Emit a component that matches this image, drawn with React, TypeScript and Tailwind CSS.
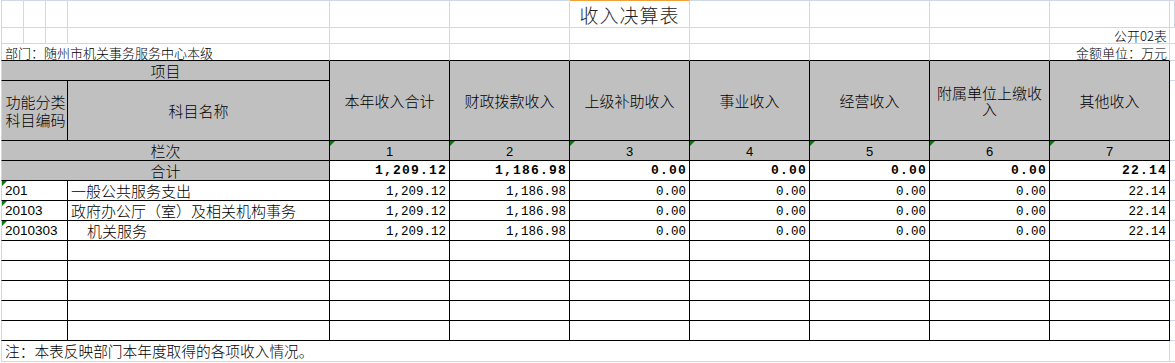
import React from 'react';

// Income statement sheet, drawn as a spreadsheet table
const heads = ['本年收入合计', '财政拨款收入', '上级补助收入', '事业收入', '经营收入', '附属单位上缴收入', '其他收入'];
const totals = ['1,209.12', '1,186.98', '0.00', '0.00', '0.00', '0.00', '22.14'];
const rows = [
  { code: '201', name: '一般公共服务支出', indent: false },
  { code: '20103', name: '政府办公厅（室）及相关机构事务', indent: false },
  { code: '2010303', name: '机关服务', indent: true },
];

const grid = 'border-[#d0d7e5]';

const Flag = () => (
  <div className="absolute top-0 left-0 w-0 h-0 border-t-[5px] border-t-[#008000] border-r-[5px] border-r-transparent" />
);

const App: React.FC = () => {
  const cols = [0, 1, 2, 3, 4, 5, 6];

  return (
    <div className="w-[1175px] h-[363px] overflow-hidden bg-white pl-px text-black font-light font-['Noto_Sans_CJK_SC',sans-serif]">
      <table className="table-fixed border-separate border-spacing-0 w-[1174px]">
        <colgroup>
          <col className="w-[23px]" />
          <col className="w-[22px]" />
          <col className="w-[22px]" />
          <col className="w-[262px]" />
          {cols.map((i) => (
            <col key={i} className="w-[120px]" />
          ))}
          <col className="w-[5px]" />
        </colgroup>
        <tbody>
          {/* title row */}
          <tr>
            {[0, 1, 2, 3, 4, 5].map((i) => (
              <td key={i} className={`h-[28px] border-t border-r border-b ${grid} ${i === 0 ? 'border-l' : ''}`} />
            ))}
            <td className={`h-[28px] border-t border-t-[#f0a13c] border-r border-b ${grid} text-center align-middle text-[19px] leading-none text-[#222] tracking-[1px]`}>
              收入决算表
            </td>
            {[7, 8, 9, 10, 11].map((i) => (
              <td key={i} className={`h-[28px] border-t border-r border-b ${grid}`} />
            ))}
          </tr>

          {/* form number */}
          <tr>
            {[0, 1, 2, 3, 4, 5, 6, 7, 8, 9].map((i) => (
              <td key={i} className={`h-[16px] border-r border-b ${grid} ${i === 0 ? 'border-l' : ''}`} />
            ))}
            <td className={`h-[16px] border-r border-b ${grid} text-right align-bottom text-[13px] leading-[14px] pr-[2px] whitespace-nowrap`}>
              公开02表
            </td>
            <td className={`h-[16px] border-b ${grid}`} />
          </tr>

          {/* department + unit */}
          <tr>
            <td colSpan={4} className={`h-[17px] border-l ${grid} border-r border-b border-b-black text-[13px] leading-[14px] align-bottom pl-[3px] whitespace-nowrap`}>
              部门：随州市机关事务服务中心本级
            </td>
            {[0, 1, 2, 3, 4, 5].map((i) => (
              <td key={i} className={`h-[17px] border-r ${grid} border-b border-b-black`} />
            ))}
            <td className={`h-[17px] border-r ${grid} border-b border-b-black text-right align-bottom text-[13px] leading-[14px] pr-[2px] whitespace-nowrap`}>
              金额单位：万元
            </td>
            <td className={`h-[17px] border-b ${grid}`} />
          </tr>

          {/* header 1 */}
          <tr>
            <td colSpan={4} className={`h-[20px] bg-[#c0c0c0] border-l ${grid} border-r border-r-black border-b border-b-black text-center align-middle text-[15px] leading-none`}>
              项目
            </td>
            {heads.map((h) => (
              <td
                key={h}
                rowSpan={2}
                className="bg-[#c0c0c0] border-r border-b border-black text-center align-middle text-[15px] leading-[16px] px-[6px]"
              >
                {h}
              </td>
            ))}
            <td className={`h-[20px] border-b ${grid}`} />
          </tr>

          {/* header 2 */}
          <tr>
            <td colSpan={3} className={`h-[60px] bg-[#c0c0c0] border-l ${grid} border-r border-r-black border-b border-b-black text-center align-middle text-[15px] leading-[18px] pl-[2px]`}>
              功能分类科目编码
            </td>
            <td className="h-[60px] bg-[#c0c0c0] border-r border-b border-black text-center align-middle text-[15px] leading-none">
              科目名称
            </td>
            <td className={`h-[60px] border-b ${grid}`} />
          </tr>

          {/* column numbers */}
          <tr>
            <td colSpan={4} className={`h-[20px] bg-[#c0c0c0] border-l ${grid} border-r border-r-black border-b border-b-black text-center align-middle text-[15px] leading-none`}>
              栏次
            </td>
            {cols.map((i) => (
              <td key={i} className="relative h-[20px] bg-[#c0c0c0] border-r border-b border-black text-center align-bottom text-[13px] leading-[17px] font-normal font-['Liberation_Sans',sans-serif]">
                <Flag />
                {i + 1}
              </td>
            ))}
            <td className={`h-[20px] border-b ${grid}`} />
          </tr>

          {/* total */}
          <tr>
            <td colSpan={4} className={`h-[20px] bg-[#c0c0c0] border-l ${grid} border-r border-r-black border-b border-b-black text-center align-middle text-[15px] leading-none`}>
              合计
            </td>
            {totals.map((v, i) => (
              <td key={i} className="h-[20px] border-r border-b border-black text-right align-bottom pr-[2px] pb-[3px] text-[13px] leading-none font-bold tracking-[1.2px] font-['Liberation_Mono',monospace]">
                {v}
              </td>
            ))}
            <td className={`h-[20px] border-b ${grid}`} />
          </tr>

          {/* data rows */}
          {rows.map((r) => (
            <tr key={r.code}>
              <td colSpan={3} className={`relative h-[20px] border-l ${grid} border-r border-r-black border-b border-b-black align-bottom pl-[3px] pb-[3px] text-[13.5px] leading-none font-normal font-['Liberation_Sans',sans-serif]`}>
                <Flag />
                {r.code}
              </td>
              <td className={`h-[20px] border-r border-b border-black align-middle text-[15px] leading-none whitespace-nowrap ${r.indent ? 'pl-[19px]' : 'pl-[3px]'}`}>
                {r.name}
              </td>
              {totals.map((v, i) => (
                <td key={i} className="h-[20px] border-r border-b border-black text-right align-bottom pr-[3px] pb-[2px] text-[12.5px] leading-none font-normal font-['Liberation_Mono',monospace]">
                  {v}
                </td>
              ))}
              <td className={`h-[20px] border-b ${grid}`} />
            </tr>
          ))}

          {/* empty rows */}
          {[0, 1, 2, 3, 4].map((k) => (
            <tr key={`e${k}`}>
              <td colSpan={3} className={`h-[20px] border-l ${grid} border-r border-r-black border-b border-b-black`} />
              <td className="h-[20px] border-r border-b border-black" />
              {cols.map((i) => (
                <td key={i} className="h-[20px] border-r border-b border-black" />
              ))}
              <td className={`h-[20px] border-b ${grid}`} />
            </tr>
          ))}

          {/* note */}
          <tr>
            <td colSpan={11} className={`h-[21px] border-l border-r border-b ${grid} align-middle pl-[3px] text-[14.7px] leading-none whitespace-nowrap`}>
              注：本表反映部门本年度取得的各项收入情况。
            </td>
            <td className={`h-[21px] border-b ${grid}`} />
          </tr>
        </tbody>
      </table>
    </div>
  );
};

export default App;
